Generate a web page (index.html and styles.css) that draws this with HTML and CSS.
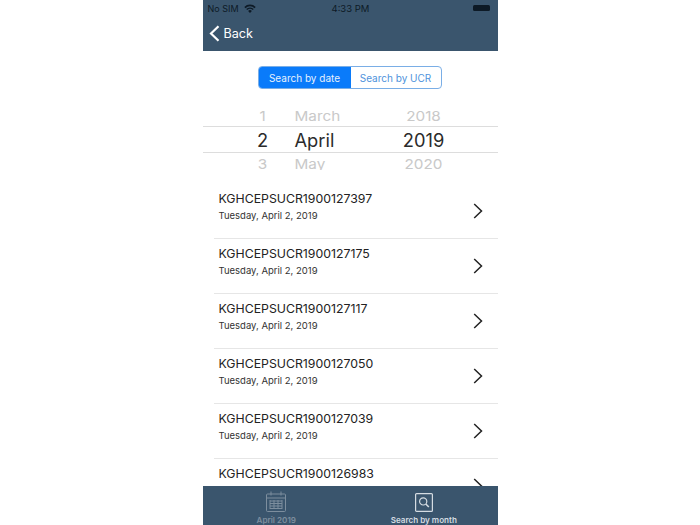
FILE: index.html
```html
<!DOCTYPE html>
<html lang="en">
<head>
    <meta charset="UTF-8">
    <title>Search</title>
    <link rel="stylesheet" href="styles.css">
</head>
<body>
    <div class="phone">
        <div class="header">
            <div class="status">
                <span class="carrier">No SIM</span>
                <svg class="wifi" width="12" height="9" viewBox="0 0 12 9"><path d="M0.3 3 A8 8 0 0 1 11.7 3 L10.5 4.2 A6.4 6.4 0 0 0 1.5 4.2 Z M2.2 5 A5.4 5.4 0 0 1 9.8 5 L8.7 6.1 A3.8 3.8 0 0 0 3.3 6.1 Z M4.1 7 A2.7 2.7 0 0 1 7.9 7 L6 8.9 Z" fill="#0d1a26"/></svg>
                <span class="clock">4:33 PM</span>
                <span class="battery"></span>
            </div>
            <div class="nav">
                <svg width="11" height="17" viewBox="0 0 11 17"><path d="M9.5 1.2 L2 8.5 L9.5 15.8" fill="none" stroke="#fff" stroke-width="2.2"/></svg>
                <span class="back">Back</span>
            </div>
        </div>

        <div class="content">
            <div class="segment">
                <div class="seg seg-on">Search by date</div>
                <div class="seg">Search by UCR</div>
            </div>

            <div class="picker">
                <div class="pick-row pick-top">
                    <span class="col-day">1</span><span class="col-month">March</span><span class="col-year">2018</span>
                </div>
                <div class="pick-row pick-now">
                    <span class="col-day">2</span><span class="col-month">April</span><span class="col-year">2019</span>
                </div>
                <div class="pick-row pick-bottom">
                    <span class="col-day">3</span><span class="col-month">May</span><span class="col-year">2020</span>
                </div>
            </div>

            <div class="list">
                <div class="item">
                    <div class="item-text"><div class="ucr">KGHCEPSUCR1900127397</div><div class="date">Tuesday, April 2, 2019</div></div>
                    <svg class="chev" width="10" height="16" viewBox="0 0 10 16"><path d="M1.2 1 L8.5 8 L1.2 15" fill="none" stroke="#222" stroke-width="1.5"/></svg>
                </div>
                <div class="item">
                    <div class="item-text"><div class="ucr">KGHCEPSUCR1900127175</div><div class="date">Tuesday, April 2, 2019</div></div>
                    <svg class="chev" width="10" height="16" viewBox="0 0 10 16"><path d="M1.2 1 L8.5 8 L1.2 15" fill="none" stroke="#222" stroke-width="1.5"/></svg>
                </div>
                <div class="item">
                    <div class="item-text"><div class="ucr">KGHCEPSUCR1900127117</div><div class="date">Tuesday, April 2, 2019</div></div>
                    <svg class="chev" width="10" height="16" viewBox="0 0 10 16"><path d="M1.2 1 L8.5 8 L1.2 15" fill="none" stroke="#222" stroke-width="1.5"/></svg>
                </div>
                <div class="item">
                    <div class="item-text"><div class="ucr">KGHCEPSUCR1900127050</div><div class="date">Tuesday, April 2, 2019</div></div>
                    <svg class="chev" width="10" height="16" viewBox="0 0 10 16"><path d="M1.2 1 L8.5 8 L1.2 15" fill="none" stroke="#222" stroke-width="1.5"/></svg>
                </div>
                <div class="item">
                    <div class="item-text"><div class="ucr">KGHCEPSUCR1900127039</div><div class="date">Tuesday, April 2, 2019</div></div>
                    <svg class="chev" width="10" height="16" viewBox="0 0 10 16"><path d="M1.2 1 L8.5 8 L1.2 15" fill="none" stroke="#222" stroke-width="1.5"/></svg>
                </div>
                <div class="item">
                    <div class="item-text"><div class="ucr">KGHCEPSUCR1900126983</div><div class="date"></div></div>
                    <svg class="chev" width="10" height="16" viewBox="0 0 10 16"><path d="M1.2 1 L8.5 8 L1.2 15" fill="none" stroke="#222" stroke-width="1.5"/></svg>
                </div>
            </div>
        </div>

        <div class="tabs">
            <div class="tab tab-off">
                <svg width="20" height="21" viewBox="0 0 20 21" fill="none" stroke="#7d8e9e" stroke-width="1"><rect x="0.5" y="3" width="19" height="17.5" rx="1"/><path d="M0.5 7 H19.5 M5 0.5 V4.5 M15 0.5 V4.5"/><path d="M4 10 H16 M4 12.5 H16 M4 15 H16 M4 17.5 H16 M4 9 V18 M8 9 V18 M12 9 V18 M16 9 V18"/></svg>
                <span>April 2019</span>
            </div>
            <div class="tab">
                <svg width="18" height="19" viewBox="0 0 18 19" fill="none" stroke="#d5dce2" stroke-width="1.2"><rect x="0.6" y="0.6" width="16.8" height="17.8" rx="1"/><circle cx="8.2" cy="8.4" r="3.6"/><path d="M10.8 11 L13.8 14" stroke-width="1.6"/></svg>
                <span>Search by month</span>
            </div>
        </div>
    </div>
</body>
</html>
```
FILE: styles.css
```css
html, body {
    margin: 0;
    height: 100%;
}

body {
    background-color: #ffffff;
    font-family: 'Inter', 'Liberation Sans', sans-serif;
    display: flex;
    justify-content: center;
    overflow: hidden;
}

.phone {
    width: 295px;
    height: 525px;
    display: flex;
    flex-direction: column;
    overflow: hidden;
}

.header {
    background-color: #3a556d;
    height: 51px;
    flex-shrink: 0;
}

.status {
    height: 16px;
    padding: 0 5px;
    display: flex;
    align-items: center;
    font-size: 9px;
    color: #0d1a26;
    position: relative;
}

.carrier {
    margin-right: 5px;
}

.clock {
    position: absolute;
    left: 129px;
    top: 3px;
    font-size: 9.5px;
}

.battery {
    width: 17px;
    height: 6px;
    background-color: #0d1a26;
    border-radius: 1.5px;
    margin-left: auto;
    margin-right: 3px;
}

.nav {
    height: 35px;
    display: flex;
    align-items: center;
    gap: 4px;
    padding-left: 6px;
    color: #ffffff;
    font-size: 12.6px;
}

.back {
    padding-bottom: 1px;
}

.content {
    flex: 1;
    min-height: 0;
    overflow: hidden;
}

.segment {
    width: 184px;
    height: 23px;
    box-sizing: border-box;
    margin: 15px 0 0 55px;
    display: flex;
    border: 1px solid #7aaee6;
    border-radius: 4px;
    overflow: hidden;
    font-size: 10px;
}

.seg {
    flex: 1;
    display: flex;
    align-items: center;
    justify-content: center;
    color: #4f93dc;
}

.seg-on {
    flex: 0 0 92px;
    background-color: #0a7bfa;
    color: #e6f1fe;
}

.picker {
    margin-top: 16px;
    height: 65px;
    display: flex;
    flex-direction: column;
}

.pick-row {
    display: grid;
    grid-template-columns: 92px 64px 1fr;
    align-items: center;
}

.col-day {
    padding-left: 28px;
    text-align: center;
}

.col-year {
    padding-right: 9px;
    text-align: center;
}

.pick-top,
.pick-bottom {
    font-size: 15.3px;
    line-height: 17px;
    color: #c9c9c9;
    overflow: hidden;
}

.pick-top {
    height: 21px;
    box-sizing: border-box;
    align-items: end;
    padding-bottom: 1px;
}

.pick-top span {
    transform: scaleY(0.85);
}

.pick-bottom {
    height: 17px;
    align-items: start;
    padding-top: 3px;
    box-sizing: border-box;
}

.pick-bottom span {
    transform: scaleY(0.9);
    transform-origin: top;
}

.pick-now {
    height: 28px;
    padding-top: 2px;
    border-top: 1px solid #dddddd;
    border-bottom: 1px solid #dddddd;
    box-sizing: border-box;
    font-size: 18.3px;
    color: #2b2b2b;
}

.list {
    margin-top: 14px;
    margin-left: 11px;
}

.item {
    height: 55px;
    box-sizing: border-box;
    border-bottom: 1px solid #e6e6e6;
    padding: 0 15px 0 5px;
    display: flex;
    align-items: center;
    justify-content: space-between;
}

.item-text {
    padding-bottom: 10px;
}

.ucr {
    font-size: 12.3px;
    line-height: 15px;
    color: #222222;
    margin-bottom: 4px;
}

.date {
    font-size: 9.5px;
    line-height: 12px;
    min-height: 12px;
    color: #333333;
}

.tabs {
    height: 39px;
    flex-shrink: 0;
    background-color: #3a556d;
    display: flex;
    position: relative;
}

.tab {
    flex: 1;
    display: flex;
    flex-direction: column;
    align-items: center;
    justify-content: flex-end;
    gap: 3px;
    font-size: 8.1px;
    font-weight: 600;
    color: #d5dce2;
}

.tab-off {
    color: #7d8e9e;
}
```
